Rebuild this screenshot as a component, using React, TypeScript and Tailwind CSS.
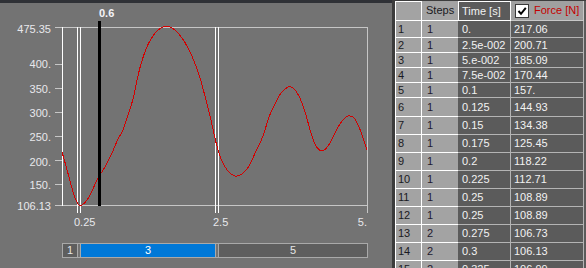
import React from 'react';

type Pt = [number, number];

// force curve, sampled in page pixels
const curve: Pt[] = [
  [62, 152], [66, 166], [70, 181], [74, 195], [78, 204], [82, 205], [87, 200], [92, 191],
  [98, 178], [105, 167], [112, 153], [118, 139], [123, 130], [128, 115], [133, 99], [137, 80],
  [141, 64], [146, 49], [151, 39], [157, 31], [163, 27], [170, 27], [176, 31], [182, 38],
  [188, 48], [194, 61], [200, 78], [206, 100], [211, 120], [214, 134], [218, 150], [222, 161],
  [228, 171], [235, 176], [242, 174], [249, 166], [256, 151], [263, 136], [269, 117], [275, 104],
  [281, 93], [288, 87], [293, 88], [299, 96], [305, 112], [311, 133], [316, 146], [322, 151],
  [328, 146], [334, 135], [340, 124], [346, 117], [350, 116], [355, 119], [361, 132], [367, 150],
];

function toPath(p: Pt[]) {
  let d = `M${p[0][0]} ${p[0][1]}`;
  for (let i = 0; i < p.length - 1; i++) {
    const p0 = p[i - 1] || p[i];
    const p1 = p[i];
    const p2 = p[i + 1];
    const p3 = p[i + 2] || p2;
    const c1x = p1[0] + (p2[0] - p0[0]) / 6;
    const c1y = p1[1] + (p2[1] - p0[1]) / 6;
    const c2x = p2[0] - (p3[0] - p1[0]) / 6;
    const c2y = p2[1] - (p3[1] - p1[1]) / 6;
    d += ` C${c1x} ${c1y} ${c2x} ${c2y} ${p2[0]} ${p2[1]}`;
  }
  return d;
}

const yTicks: { y: number; base: number; label: string }[] = [
  { y: 27, base: 33, label: '475.35' },
  { y: 64, base: 68, label: '400.' },
  { y: 88, base: 93, label: '350.' },
  { y: 112, base: 117, label: '300.' },
  { y: 136, base: 141, label: '250.' },
  { y: 160, base: 166, label: '200.' },
  { y: 184, base: 189, label: '150.' },
  { y: 205, base: 210, label: '106.13' },
];

const rows: { h: string; n: string; step: string; t: string; f: string }[] = [
  { h: 'h-[17px]', n: '1', step: '1', t: '0.', f: '217.06' },
  { h: 'h-[15px]', n: '2', step: '1', t: '2.5e-002', f: '200.71' },
  { h: 'h-[15px]', n: '3', step: '1', t: '5.e-002', f: '185.09' },
  { h: 'h-[15px]', n: '4', step: '1', t: '7.5e-002', f: '170.44' },
  { h: 'h-[15px]', n: '5', step: '1', t: '0.1', f: '157.' },
  { h: 'h-[19px]', n: '6', step: '1', t: '0.125', f: '144.93' },
  { h: 'h-[18px]', n: '7', step: '1', t: '0.15', f: '134.38' },
  { h: 'h-[18px]', n: '8', step: '1', t: '0.175', f: '125.45' },
  { h: 'h-[18px]', n: '9', step: '1', t: '0.2', f: '118.22' },
  { h: 'h-[18px]', n: '10', step: '1', t: '0.225', f: '112.71' },
  { h: 'h-[18px]', n: '11', step: '1', t: '0.25', f: '108.89' },
  { h: 'h-[18px]', n: '12', step: '1', t: '0.25', f: '108.89' },
  { h: 'h-[18px]', n: '13', step: '2', t: '0.275', f: '106.73' },
  { h: 'h-[18px]', n: '14', step: '2', t: '0.3', f: '106.13' },
  { h: 'h-[18px]', n: '15', step: '2', t: '0.325', f: '106.99' },
];

function Chart() {
  const font = "'Liberation Sans', Arial, sans-serif";
  return (
    <svg width={392} height={237} viewBox="0 3 392 237" shapeRendering="crispEdges" className="block">
      {/* frame */}
      <line x1={55} y1={27.5} x2={367} y2={27.5} stroke="#c6c6c6" />
      <line x1={55} y1={205.5} x2={367} y2={205.5} stroke="#c6c6c6" />
      <line x1={367.5} y1={27} x2={367.5} y2={213} stroke="#c6c6c6" />
      {yTicks.slice(1, -1).map((t) => (
        <line key={t.label} x1={55} y1={t.y + 0.5} x2={62} y2={t.y + 0.5} stroke="#c6c6c6" />
      ))}
      <line x1={62.5} y1={27} x2={62.5} y2={206} stroke="#ffffff" />
      {/* step markers */}
      {[77, 80, 215, 218].map((x) => (
        <line key={x} x1={x + 0.5} y1={27} x2={x + 0.5} y2={213} stroke="#ffffff" />
      ))}
      {/* curve */}
      <path d={toPath(curve)} fill="none" stroke="#d40000" strokeWidth={1} />
      {/* cursor */}
      <rect x={98} y={21} width={3} height={185} fill="#000000" />
      {/* labels */}
      {yTicks.map((t) => (
        <text key={t.label} x={51} y={t.base} textAnchor="end" fontFamily={font} fontSize={11} fill="#e8e8ec">
          {t.label}
        </text>
      ))}
      <text x={74} y={226} fontFamily={font} fontSize={11} fill="#e8e8ec">0.25</text>
      <text x={213} y={226} fontFamily={font} fontSize={11} fill="#e8e8ec">2.5</text>
      <text x={367} y={226} textAnchor="end" fontFamily={font} fontSize={11} fill="#e8e8ec">5.</text>
      <text x={99} y={17} fontFamily={font} fontSize={11} fontWeight={700} fill="#f4f4f8">0.6</text>
    </svg>
  );
}

function StepBar() {
  return (
    <div className="ml-[62px] mt-[3px] flex h-[15px] w-[306px] border border-[#a9a9a9] text-[11px] leading-none text-[#e6e6e6]">
      <div className="flex w-[14px] items-center justify-center bg-[#5e5e5e]">1</div>
      <div className="w-[4px] border-x border-[#a9a9a9] bg-[#737373]" />
      <div className="flex w-[134px] items-center justify-center bg-[#0078d7] text-white">3</div>
      <div className="w-[4px] border-x border-[#a9a9a9] bg-[#737373]" />
      <div className="flex flex-1 items-center justify-center bg-[#5e5e5e]">5</div>
    </div>
  );
}

function DataTable() {
  return (
    <div className="flex w-[194px] flex-col bg-[#3c3c3c] pl-[3px] pt-[1px] text-[11px] leading-none">
      <div className="flex h-[20px] shrink-0">
        <div className="w-[27px] border border-white bg-[#a3a3a3]" />
        <div className="flex w-[36px] items-center border-b border-white bg-[#a3a3a3] pl-[4px] text-[#1a1a22]">Steps</div>
        <div className="flex w-[53px] items-center border border-white bg-[#5b5b5b] pl-[3px] text-[#f2f2f2]">Time [s]</div>
        <div className="flex w-[73px] items-center gap-[5px] border-b border-r border-[#c8c8c8] bg-[#a0a0a0] pl-[4px] text-[#c40000]">
          <div className="flex h-[14px] w-[14px] items-center justify-center border border-[#3a3a3a] bg-white">
            <svg width="10" height="10" viewBox="0 0 10 10">
              <path d="M1.5 5 L4 7.8 L8.8 1.8" fill="none" stroke="#000" strokeWidth="2" />
            </svg>
          </div>
          <span>Force [N]</span>
        </div>
        <div className="flex-1 bg-[#5b5b5b]" />
      </div>
      {rows.map((r) => (
        <div key={r.n} className={`flex shrink-0 ${r.h}`}>
          <div className="flex w-[27px] items-center border-x border-b border-white bg-[#a3a3a3] pl-[2px] text-[#1a1a22]">{r.n}</div>
          <div className="flex w-[36px] items-center border-b border-white bg-[#a3a3a3] pl-[5px] text-[#22182e]">{r.step}</div>
          <div className="flex w-[53px] items-center border-b border-r border-[#b4b4b4] bg-[#5b5b5b] pl-[4px] text-[#f2f2f2]">{r.t}</div>
          <div className="flex w-[73px] items-center border-b border-r border-[#b4b4b4] bg-[#5b5b5b] pl-[3px] text-[#f2f2f2]">{r.f}</div>
          <div className="flex-1 bg-[#5b5b5b]" />
        </div>
      ))}
    </div>
  );
}

export default function App() {
  return (
    <div className="flex h-[268px] w-[586px] overflow-hidden bg-[#2f3136] font-['Liberation_Sans',Arial,sans-serif]">
      <div className="flex w-[392px] flex-col pt-[3px]">
        <div className="flex flex-1 flex-col bg-[#737373]">
          <Chart />
          <StepBar />
        </div>
      </div>
      <DataTable />
    </div>
  );
}
